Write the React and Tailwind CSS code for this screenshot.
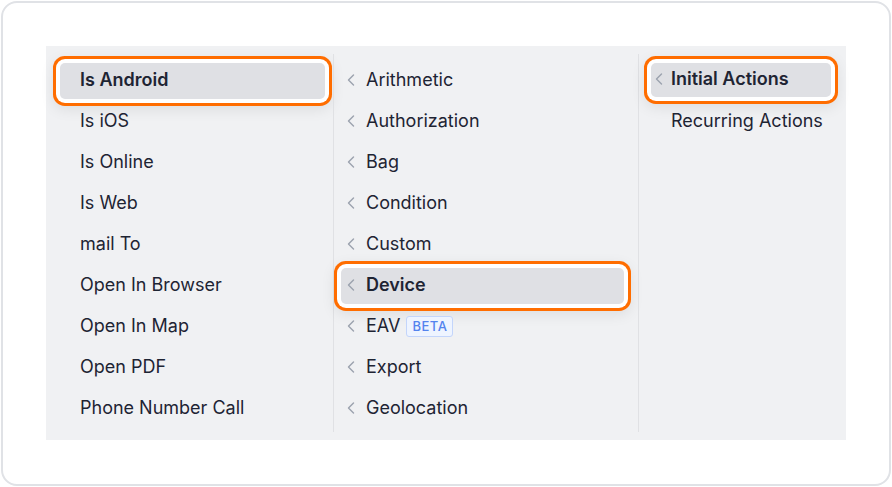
import React from "react";
import { ChevronLeft } from "lucide-react";

const colOne = [
  "Is Android",
  "Is iOS",
  "Is Online",
  "Is Web",
  "mail To",
  "Open In Browser",
  "Open In Map",
  "Open PDF",
  "Phone Number Call",
];

const colTwo = [
  "Arithmetic",
  "Authorization",
  "Bag",
  "Condition",
  "Custom",
  "Device",
  "EAV",
  "Export",
  "Geolocation",
];

function Row({ label, active, chevron, beta, short, tight }) {
  return (
    <div
      className={
        "flex items-center rounded-[5px] pb-[3px] " +
        (short ? "h-[34px] " : "h-9 ") +
        (chevron ? "pl-0 " : "pl-5 ") +
        (active
          ? "bg-[#dfe0e4] font-semibold shadow-[0_0_0_4px_#ffffff,0_0_0_7px_#ff6d00,0_4px_14px_7px_rgba(0,0,0,0.08)]"
          : "")
      }
    >
      {chevron && (
        <ChevronLeft
          size={20}
          strokeWidth={1.7}
          className={"text-[#9ca3af] shrink-0 " + (tight ? "-ml-[2px] mr-[2px]" : "mr-[5px]")}
        />
      )}
      <span>{label}</span>
      {beta && (
        <span className="ml-[6px] mt-[2px] px-[5px] h-[21px] flex items-center rounded-[3px] border border-[#c3d5fb] bg-[#eef4ff] text-[#5383ee] text-[13px] font-medium tracking-[0.5px]">
          BETA
        </span>
      )}
    </div>
  );
}

export default function App() {
  return (
    <div className="w-[892px] h-[487px] bg-white p-px">
      <div
        className="w-full h-full rounded-[16px] border-2 border-[#e0e2e6] bg-white pt-[43px] pl-[43px] text-[18px] text-[#1e2433]"
        style={{ fontFamily: "Inter, 'Noto Sans', sans-serif" }}
      >
        <div className="w-[800px] h-[394px] bg-[#f0f1f3] flex">
          <div className="w-[287px] pt-[17px] pl-[14px] pr-[8px] flex flex-col gap-[5px]">
            {colOne.map((l, i) => (
              <Row key={l} label={l} active={i === 0} />
            ))}
          </div>
          <div className="w-px bg-[#e0e1e4] my-2" />
          <div className="w-[304px] pt-[17px] pl-[7px] pr-[14px] flex flex-col gap-[5px]">
            {colTwo.map((l) => (
              <Row key={l} label={l} chevron active={l === "Device"} beta={l === "EAV"} />
            ))}
          </div>
          <div className="w-px bg-[#e0e1e4] my-2" />
          <div className="flex-1 pt-[17px] pl-[12px] pr-[15px] flex flex-col gap-[7px]">
            <Row label="Initial Actions" chevron active short tight />
            <Row label="Recurring Actions" />
          </div>
        </div>
      </div>
    </div>
  );
}
